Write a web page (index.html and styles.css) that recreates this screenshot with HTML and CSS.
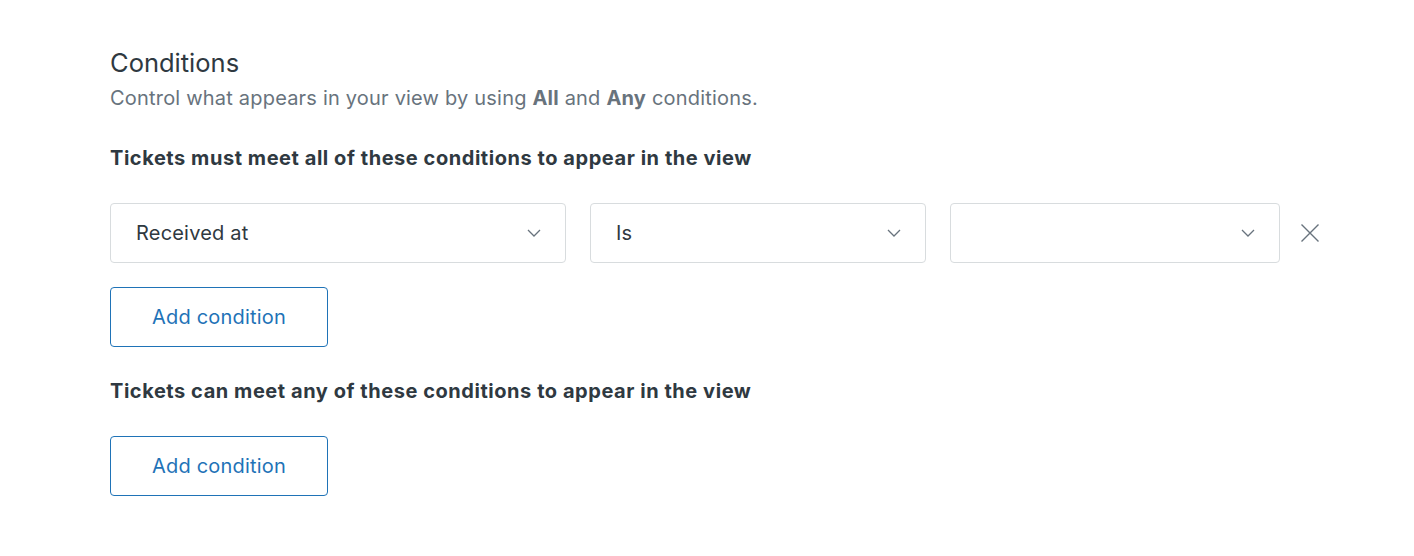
FILE: index.html
```html
<!DOCTYPE html>
<html>
<head>
<meta charset="utf-8">
<link rel="stylesheet" href="styles.css">
</head>
<body>
<section class="conditions">
  <h2 class="title">Conditions</h2>
  <p class="subtitle">Control what appears in your view by using <b>All</b> and <b>Any</b> conditions.</p>

  <h3 class="group-title">Tickets must meet all of these conditions to appear in the view</h3>
  <div class="row">
    <div class="select field-1"><span class="value">Received at</span>
      <svg class="chev" width="14" height="8" viewBox="0 0 14 8"><path d="M1 1l6 6 6-6" fill="none" stroke="#68737d" stroke-width="1.3"/></svg>
    </div>
    <div class="select field-2"><span class="value">Is</span>
      <svg class="chev" width="14" height="8" viewBox="0 0 14 8"><path d="M1 1l6 6 6-6" fill="none" stroke="#68737d" stroke-width="1.3"/></svg>
    </div>
    <div class="select field-3"><span class="value"></span>
      <svg class="chev" width="14" height="8" viewBox="0 0 14 8"><path d="M1 1l6 6 6-6" fill="none" stroke="#68737d" stroke-width="1.3"/></svg>
    </div>
    <button class="remove" aria-label="Remove">
      <svg width="20" height="20" viewBox="0 0 20 20"><path d="M1.5 1.5l17 17M18.5 1.5l-17 17" fill="none" stroke="#68737d" stroke-width="1.4"/></svg>
    </button>
  </div>
  <button class="add">Add condition</button>

  <h3 class="group-title second">Tickets can meet any of these conditions to appear in the view</h3>
  <button class="add">Add condition</button>
</section>
</body>
</html>
```
FILE: styles.css
```css
html, body {
  margin: 0;
  padding: 0;
  background: #ffffff;
}
body {
  font-family: Inter, "Noto Sans", sans-serif;
  color: #2f3941;
}
.conditions {
  padding: 47px 0 0 110px;
}
.title {
  margin: 0;
  font-size: 25.5px;
  line-height: 32px;
  font-weight: 400;
  color: #2f3941;
}
.subtitle {
  margin: 6px 0 0;
  font-size: 20px;
  line-height: 26px;
  letter-spacing: 0.2px;
  color: #68737d;
}
.subtitle b {
  font-weight: 700;
}
.group-title {
  margin: 34px 0 0;
  font-size: 20px;
  line-height: 26px;
  font-weight: 700;
  letter-spacing: 0.55px;
  color: #2f3941;
}
.group-title.second {
  margin-top: 31px;
}
.row {
  display: flex;
  align-items: center;
  gap: 24px;
  margin-top: 32px;
}
.select {
  box-sizing: border-box;
  height: 60px;
  border: 1px solid #d8dcde;
  border-radius: 4px;
  display: flex;
  align-items: center;
  justify-content: space-between;
  padding: 0 24px 0 25px;
  font-size: 20px;
  letter-spacing: 0.2px;
  color: #2f3941;
}
.field-1 { width: 456px; }
.field-2 { width: 336px; }
.field-3 { width: 330px; }
.remove {
  margin-left: -4px;
  border: 0;
  background: none;
  padding: 0;
  width: 20px;
  height: 20px;
  display: flex;
}
.add {
  display: block;
  box-sizing: border-box;
  width: 218px;
  height: 60px;
  margin-top: 24px;
  border: 1px solid #1f73b7;
  border-radius: 4px;
  background: #fff;
  color: #1f73b7;
  font-family: Inter, "Noto Sans", sans-serif;
  font-size: 20px;
  letter-spacing: 0.2px;
}
.group-title + .add {
  margin-top: 32px;
}
```
